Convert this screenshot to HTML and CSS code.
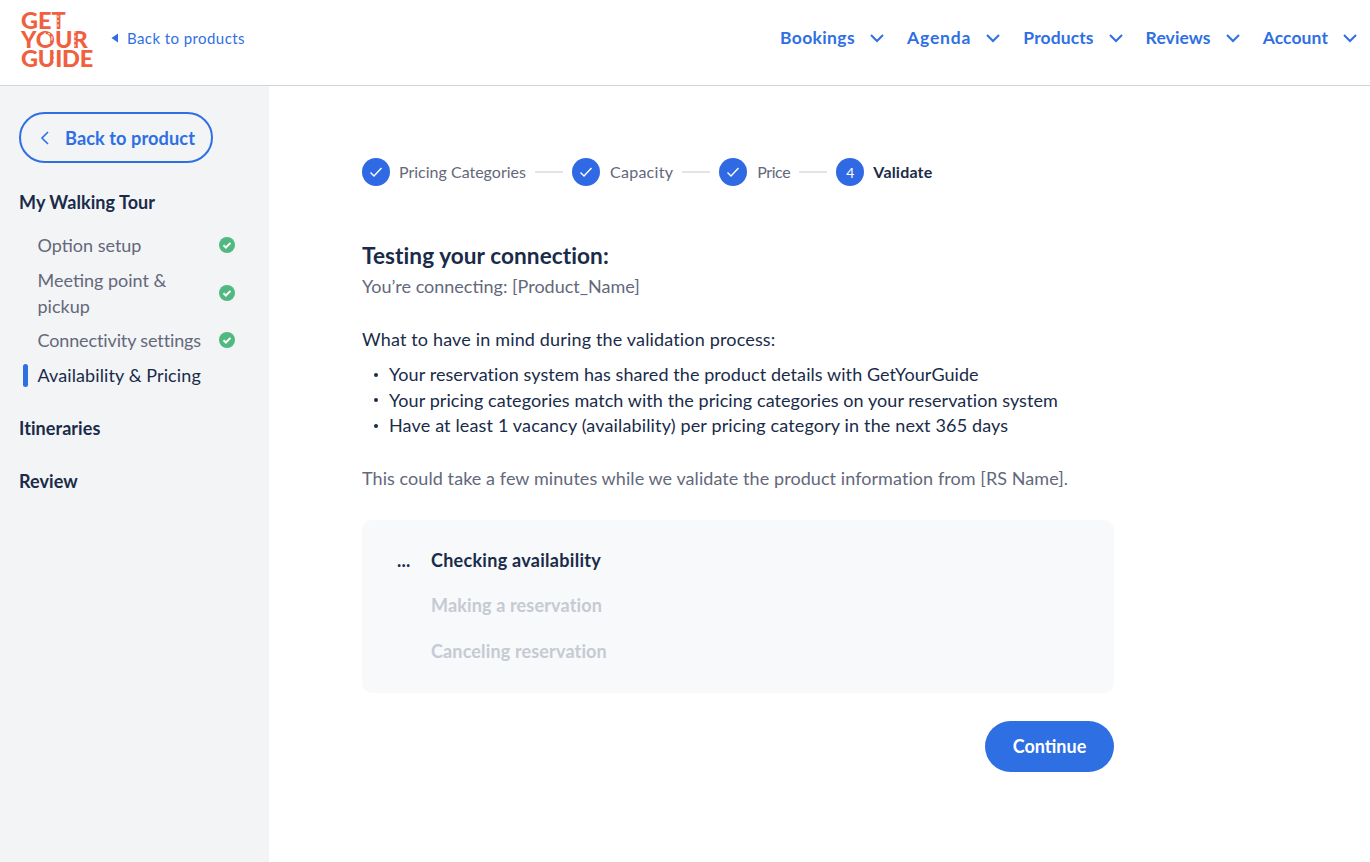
FILE: index.html
```html
<!DOCTYPE html>
<html lang="en">
<head>
<meta charset="utf-8">
<title>Validate</title>
<link rel="stylesheet" href="styles.css">
</head>
<body>
<header class="topbar">
  <div class="logo"><span>GET</span><span>YOUR</span><span>GUIDE</span>
    <svg class="logo-cuts" viewBox="0 0 72 57" aria-hidden="true"><path d="M37 4.5v12"/><path d="M54 20v16"/><path d="M33 39v16"/><circle cx="25.5" cy="27.5" r="5.5"/></svg>
  </div>
  <a class="back-products"><svg class="tri" viewBox="0 0 8 10" width="8" height="10"><path d="M7 0.5V9.5L0.5 5Z"/></svg>Back to products</a>
  <nav class="nav">
    <a>Bookings<svg class="chev" viewBox="0 0 16 10"><path d="M2 2l6 6 6-6"/></svg></a>
    <a>Agenda<svg class="chev" viewBox="0 0 16 10"><path d="M2 2l6 6 6-6"/></svg></a>
    <a>Products<svg class="chev" viewBox="0 0 16 10"><path d="M2 2l6 6 6-6"/></svg></a>
    <a>Reviews<svg class="chev" viewBox="0 0 16 10"><path d="M2 2l6 6 6-6"/></svg></a>
    <a>Account<svg class="chev" viewBox="0 0 16 10"><path d="M2 2l6 6 6-6"/></svg></a>
  </nav>
</header>
<div class="layout">
  <aside class="sidebar">
    <a class="back-product"><svg class="left" viewBox="0 0 10 16"><path d="M8 2L2 8l6 6"/></svg>Back to product</a>
    <h3 class="side-title first">My Walking Tour</h3>
    <ul class="side-list">
      <li class="side-item"><span>Option setup</span><svg class="ok" viewBox="0 0 16 16"><circle cx="8" cy="8" r="8"/><path d="M4.5 8.2l2.4 2.3 4.6-4.6"/></svg></li>
      <li class="side-item"><span>Meeting point &amp; pickup</span><svg class="ok" viewBox="0 0 16 16"><circle cx="8" cy="8" r="8"/><path d="M4.5 8.2l2.4 2.3 4.6-4.6"/></svg></li>
      <li class="side-item"><span>Connectivity settings</span><svg class="ok" viewBox="0 0 16 16"><circle cx="8" cy="8" r="8"/><path d="M4.5 8.2l2.4 2.3 4.6-4.6"/></svg></li>
      <li class="side-item active"><span>Availability &amp; Pricing</span></li>
    </ul>
    <h3 class="side-title">Itineraries</h3>
    <h3 class="side-title">Review</h3>
  </aside>
  <main class="main">
    <ol class="steps">
      <li class="step"><span class="dot"><svg viewBox="0 0 14 12"><path d="M1.5 6.5l3.5 3.5 7.5-8"/></svg></span><span class="label">Pricing Categories</span></li>
      <li class="line"></li>
      <li class="step"><span class="dot"><svg viewBox="0 0 14 12"><path d="M1.5 6.5l3.5 3.5 7.5-8"/></svg></span><span class="label">Capacity</span></li>
      <li class="line"></li>
      <li class="step"><span class="dot"><svg viewBox="0 0 14 12"><path d="M1.5 6.5l3.5 3.5 7.5-8"/></svg></span><span class="label">Price</span></li>
      <li class="line"></li>
      <li class="step current"><span class="dot">4</span><span class="label">Validate</span></li>
    </ol>
    <h1 class="title">Testing your connection:</h1>
    <p class="sub">You’re connecting: [Product_Name]</p>
    <p class="lead">What to have in mind during the validation process:</p>
    <ul class="bullets">
      <li>Your reservation system has shared the product details with GetYourGuide</li>
      <li>Your pricing categories match with the pricing categories on your reservation system</li>
      <li>Have at least 1 vacancy (availability) per pricing category in the next 365 days</li>
    </ul>
    <p class="note">This could take a few minutes while we validate the product information from [RS Name].</p>
    <section class="panel">
      <div class="check now"><span class="mark">...</span>Checking availability</div>
      <div class="check"><span class="mark"></span>Making a reservation</div>
      <div class="check"><span class="mark"></span>Canceling reservation</div>
    </section>
    <div class="actions"><button class="continue">Continue</button></div>
  </main>
</div>
</body>
</html>
```
FILE: styles.css
```css
* { box-sizing: border-box; }
html, body { margin: 0; height: 100%; }
body { font-family: "Lato", "Open Sans", sans-serif; font-size: 18px; letter-spacing: 0.07px; color: #1a2b49; background: #fff; overflow: hidden; }
a { color: #2f6fe4; text-decoration: none; }
ul, ol { list-style: none; margin: 0; padding: 0; }
h1, h3, p { margin: 0; }

.topbar { height: 86px; border-bottom: 1px solid #d3d4da; display: flex; align-items: center; padding: 0 12px 10px 21px; }
.logo { position: relative; display: flex; flex-direction: column; width: 72px; margin-top: 4px; font-weight: 900; font-size: 23.5px; line-height: 19px; letter-spacing: 0; color: #f0603f; }
.logo span:nth-child(2) { letter-spacing: 0.2px; }
.logo span:nth-child(3) { letter-spacing: -0.2px; }
.logo-cuts { position: absolute; left: 0; top: 0; width: 72px; height: 57px; fill: none; stroke: #fff; stroke-width: 1.1; stroke-dasharray: 2 2.5; }
.back-products { display: flex; align-items: center; margin-left: 18px; font-size: 15px; letter-spacing: 0.42px; }
.tri { fill: #2f6fe4; margin-right: 8px; }
.nav { margin-left: auto; display: flex; gap: 22px; }
.nav a { display: flex; align-items: center; font-size: 17.5px; font-weight: 700; letter-spacing: 0.1px; }
.nav a:nth-child(1) { letter-spacing: 0.35px; }
.nav a:nth-child(2) { letter-spacing: 0.85px; }
.chev { width: 16px; height: 10px; margin-left: 14px; fill: none; stroke: #2f6fe4; stroke-width: 2; }

.layout { display: flex; height: 776px; }
.sidebar { width: 269px; flex: none; background: #f3f4f6; padding: 26px 34.5px 0 19px; }
.back-product { display: flex; align-items: center; width: 194px; height: 51px; border: 2px solid #2f6fe4; border-radius: 26px; padding-left: 19px; font-size: 18.2px; font-weight: 700; }
.left { width: 10px; height: 16px; margin-right: 15px; fill: none; stroke: #2f6fe4; stroke-width: 1.6; }
.side-title { font-size: 18px; font-weight: 700; line-height: 26px; margin-top: 27px; }
.side-title.first { margin-top: 26px; }
.side-list { margin-top: 17px; margin-bottom: 27px; display: flex; flex-direction: column; gap: 8.7px; }
.side-item { position: relative; display: flex; align-items: center; justify-content: space-between; padding-left: 18.5px; font-size: 18px; line-height: 26px; letter-spacing: 0; color: #63687a; }
.side-item:nth-child(3) { letter-spacing: -0.13px; }
.side-item span { max-width: 172px; }
.side-item.active { color: #1a2b49; letter-spacing: 0.1px; }
.side-item.active::before { content: ""; position: absolute; left: 4px; top: 2px; width: 5px; height: 23px; border-radius: 3px; background: #2f6fe4; }
.ok { width: 16px; height: 16px; flex: none; }
.ok circle { fill: #4fb97f; }
.ok path { fill: none; stroke: #fff; stroke-width: 2; }

.main { flex: 1; padding: 0 0 0 93px; }
.steps { display: flex; align-items: center; margin-top: 72px; height: 28px; font-size: 16px; letter-spacing: 0; color: #63687a; }
.step { display: flex; align-items: center; gap: 9px; }
.step:nth-child(3) { gap: 10px; }
.step:nth-child(3) .label { letter-spacing: 0.28px; }
.step:nth-child(5) { gap: 10px; }
.step:nth-child(5) .label { letter-spacing: -0.4px; }
.label { position: relative; top: -1px; }
.step.current { color: #1a2b49; font-weight: 700; }
.step.current .label { letter-spacing: 0.2px; }
.dot { width: 28px; height: 28px; border-radius: 50%; background: #2f6ae4; color: #fff; display: flex; align-items: center; justify-content: center; font-size: 14px; font-weight: 400; }
.dot svg { width: 14px; height: 12px; fill: none; stroke: #fff; stroke-width: 1.4; }
.line { width: 28px; height: 2px; background: #e3e4e8; margin: 0 9px; }

.title { font-size: 22.6px; font-weight: 700; line-height: 30px; margin-top: 55px; }
.sub { font-size: 18px; line-height: 26px; letter-spacing: 0; color: #63687a; margin-top: 2px; }
.lead { font-size: 18px; line-height: 26px; letter-spacing: 0.16px; margin-top: 27px; }
.bullets { margin-top: 10px; }
.bullets li { position: relative; padding-left: 27px; font-size: 18px; line-height: 25.5px; }
.bullets li:nth-child(3) { letter-spacing: 0.15px; }
.bullets li::before { content: ""; position: absolute; left: 11.5px; top: 10.5px; width: 4px; height: 4px; border-radius: 50%; background: #1a2b49; }
.note { font-size: 18px; line-height: 26px; color: #63687a; margin-top: 26px; }
.panel { width: 752px; height: 173px; margin-top: 29px; padding: 27px 0 0 35px; background: #f8f9fb; border-radius: 10px; display: flex; flex-direction: column; gap: 19.5px; font-size: 18px; font-weight: 700; letter-spacing: 0.15px; line-height: 26px; color: #c5cad3; }
.check { display: flex; }
.check.now { color: #1a2b49; letter-spacing: 0.28px; }
.mark { width: 34px; flex: none; }
.actions { width: 752px; display: flex; justify-content: flex-end; margin-top: 28px; }
.continue { width: 129px; height: 51px; border: 0; border-radius: 26px; background: #2f6fe4; color: #fff; font: 700 18px "Lato", sans-serif; }
```
